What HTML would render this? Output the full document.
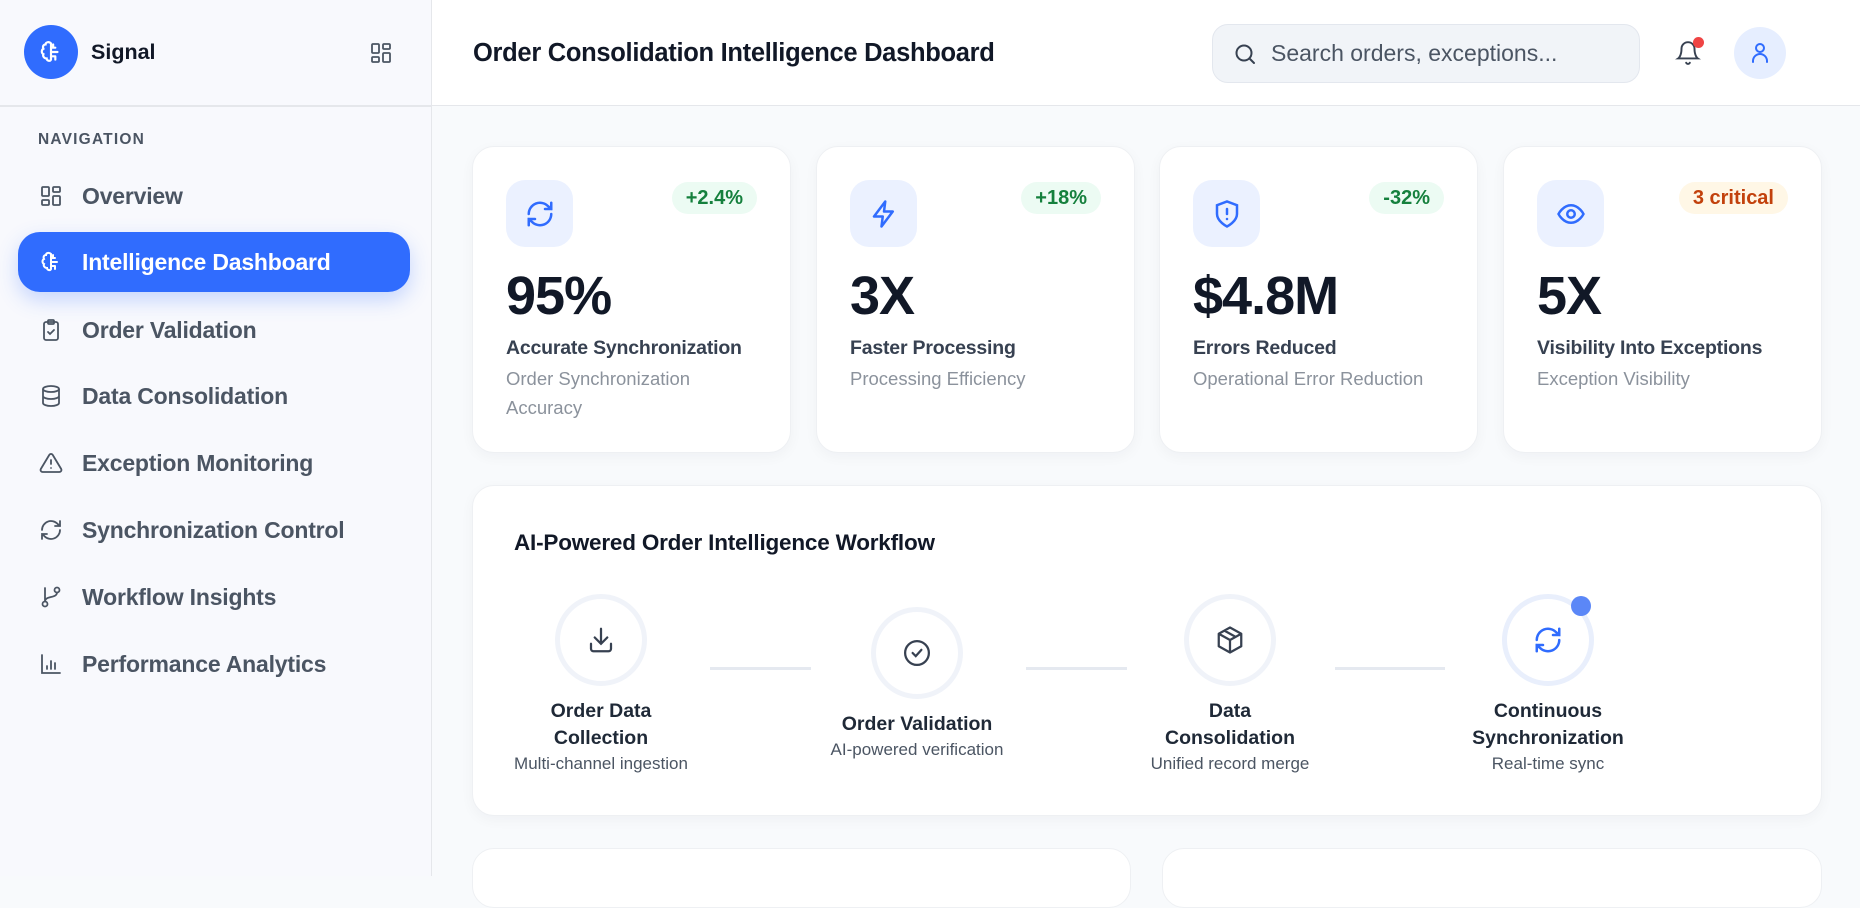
<!DOCTYPE html>
<html><head><meta charset="utf-8"><style>
*{box-sizing:border-box;margin:0;padding:0}
body{width:1860px;height:876px;overflow:hidden;background:#f8fafc;font-family:"Liberation Sans",sans-serif;position:relative;color:#111827}
.abs{position:absolute}
.side{left:0;top:0;width:432px;height:876px;background:#f8f9fd;border-right:1.5px solid #e5e7eb}
.hdr{left:432px;top:0;width:1428px;height:106px;background:#fff;border-bottom:1.5px solid #e5e7eb}
.nav{position:absolute;left:18px;width:392px;height:60px;display:flex;align-items:center;padding-left:21px;font-size:23px;font-weight:bold;color:#4b5563;letter-spacing:-0.2px}
.nav svg{width:24px;height:24px;margin-right:19px;flex:none}
.nav.act{background:#306cfe;color:#fff;border-radius:22px;box-shadow:0 8px 20px rgba(48,108,254,.25)}
.card{position:absolute;top:146px;width:319px;height:307px;background:#fff;border:1.5px solid #eef0f3;border-radius:22px;box-shadow:0 4px 14px rgba(15,23,42,.04)}
.ib{position:absolute;left:33px;top:33px;width:67px;height:67px;border-radius:19px;background:#ebf1ff;display:flex;align-items:center;justify-content:center}
.ib svg{width:30px;height:30px}
.bd{position:absolute;right:33px;top:35px;height:32px;padding:0 14px;border-radius:16px;background:#ecfbf3;color:#15803d;font-size:20px;font-weight:bold;line-height:32px}
.big{position:absolute;left:33px;top:118px;font-size:54px;font-weight:bold;color:#111827;letter-spacing:-1px}
.lb{position:absolute;left:33px;top:190px;font-size:19.5px;font-weight:bold;color:#374151;letter-spacing:-0.2px}
.sb{position:absolute;left:33px;top:218px;width:220px;font-size:18.5px;color:#8b929c;line-height:28.5px}
.step{position:absolute;width:260px;text-align:center}
.circ{width:92px;height:92px;border-radius:50%;border:5px solid #f0f3f9;margin:0 auto;display:flex;align-items:center;justify-content:center;background:#fff}
.circ svg{width:30px;height:30px}
.st{font-size:19.5px;font-weight:bold;color:#1f2937;line-height:27px;margin-top:12px}
.ss{font-size:17px;color:#4b5563;margin-top:2px}
.con{position:absolute;top:667px;height:3px;background:#e5e9f0}
</style></head><body>
<div class="abs side">
 <div class="abs" style="left:24px;top:25px;width:54px;height:54px;border-radius:50%;background:#306cfe;display:flex;align-items:center;justify-content:center">
  <svg viewBox="0 0 24 24" width="26" height="26" fill="none" stroke="#fff" stroke-width="2" stroke-linecap="round"><path d="M12 4c-2-2-5-1-5 1-2 0-3 2-2 4-2 1-2 4 0 5-1 2 1 4 3 4 0 2 3 3 4 1V4zM12 8h4M14 5v3M12 12h6M12 16h4M16 16v3"/></svg>
 </div>
 <div class="abs" style="left:91px;top:40px;font-size:21.5px;font-weight:bold;color:#111827">Signal</div>
 <svg class="abs" style="left:369px;top:41px" width="24" height="24" viewBox="0 0 24 24" fill="none" stroke="#4b5563" stroke-width="1.8"><rect x="3" y="3" width="7" height="9" rx="1"/><rect x="14" y="3" width="7" height="5" rx="1"/><rect x="14" y="12" width="7" height="9" rx="1"/><rect x="3" y="16" width="7" height="5" rx="1"/></svg>
 <div class="abs" style="left:0;top:105px;width:432px;height:1.5px;background:#e5e7eb"></div>
 <div class="abs" style="left:38px;top:131px;font-size:15.5px;font-weight:bold;color:#4b5563;letter-spacing:1.2px">NAVIGATION</div>
 <div class="nav" style="top:166px"><svg viewBox="0 0 24 24" fill="none" stroke="#4b5563" stroke-width="1.8"><rect x="3" y="3" width="7" height="9" rx="1"/><rect x="14" y="3" width="7" height="5" rx="1"/><rect x="14" y="12" width="7" height="9" rx="1"/><rect x="3" y="16" width="7" height="5" rx="1"/></svg>Overview</div>
 <div class="nav act" style="top:232px"><svg viewBox="0 0 24 24" fill="none" stroke="#fff" stroke-width="2" stroke-linecap="round"><path d="M12 4c-2-2-5-1-5 1-2 0-3 2-2 4-2 1-2 4 0 5-1 2 1 4 3 4 0 2 3 3 4 1V4zM12 8h4M14 5v3M12 12h6M12 16h4M16 16v3"/></svg>Intelligence Dashboard</div>
 <div class="nav" style="top:300px"><svg viewBox="0 0 24 24" fill="none" stroke="#4b5563" stroke-width="1.8" stroke-linecap="round"><rect x="5" y="4" width="14" height="18" rx="2"/><rect x="9" y="2" width="6" height="4" rx="1"/><path d="M9 14l2 2 4-4"/></svg>Order Validation</div>
 <div class="nav" style="top:366px"><svg viewBox="0 0 24 24" fill="none" stroke="#4b5563" stroke-width="1.8"><ellipse cx="12" cy="5" rx="8" ry="3"/><path d="M4 5v14c0 1.7 3.6 3 8 3s8-1.3 8-3V5M4 12c0 1.7 3.6 3 8 3s8-1.3 8-3"/></svg>Data Consolidation</div>
 <div class="nav" style="top:433px"><svg viewBox="0 0 24 24" fill="none" stroke="#4b5563" stroke-width="1.8" stroke-linecap="round"><path d="M10.3 3.9L1.8 18a2 2 0 001.7 3h17a2 2 0 001.7-3L13.7 3.9a2 2 0 00-3.4 0zM12 9v4M12 17h.01"/></svg>Exception Monitoring</div>
 <div class="nav" style="top:500px"><svg viewBox="0 0 24 24" fill="none" stroke="#4b5563" stroke-width="1.8" stroke-linecap="round"><path d="M3 12a9 9 0 0115.5-6.2L21 8M21 3v5h-5M21 12a9 9 0 01-15.5 6.2L3 16M3 21v-5h5"/></svg>Synchronization Control</div>
 <div class="nav" style="top:567px"><svg viewBox="0 0 24 24" fill="none" stroke="#4b5563" stroke-width="1.8" stroke-linecap="round"><circle cx="6" cy="19" r="2.5"/><circle cx="18" cy="5" r="2.5"/><path d="M6 3v13.5M18 7.5c0 6-12 3-12 9"/></svg>Workflow Insights</div>
 <div class="nav" style="top:634px"><svg viewBox="0 0 24 24" fill="none" stroke="#4b5563" stroke-width="1.8" stroke-linecap="round"><path d="M3 3v18h18M8 17v-3M12 17V9M16 17v-6"/></svg>Performance Analytics</div>
</div>
<div class="abs hdr">
 <div class="abs" style="left:41px;top:39px;font-size:25.5px;font-weight:bold;color:#111827;letter-spacing:-0.3px">Order Consolidation Intelligence Dashboard</div>
 <div class="abs" style="left:780px;top:24px;width:428px;height:59px;border-radius:16px;background:#f1f4f8;border:1.5px solid #e3e7ee">
  <svg class="abs" style="left:20px;top:17px" width="24" height="24" viewBox="0 0 24 24" fill="none" stroke="#374151" stroke-width="2" stroke-linecap="round"><circle cx="11" cy="11" r="7.5"/><path d="M16.5 16.5L21 21"/></svg>
  <div class="abs" style="left:58px;top:15px;font-size:23px;color:#4b5563">Search orders, exceptions...</div>
 </div>
 <svg class="abs" style="left:1243px;top:40px" width="26" height="26" viewBox="0 0 24 24" fill="none" stroke="#374151" stroke-width="1.8" stroke-linecap="round"><path d="M6 8a6 6 0 0112 0c0 7 3 9 3 9H3s3-2 3-9M10.3 21a1.9 1.9 0 003.4 0"/></svg>
 <div class="abs" style="left:1261px;top:37px;width:11px;height:11px;border-radius:50%;background:#ef4444"></div>
 <div class="abs" style="left:1302px;top:27px;width:52px;height:52px;border-radius:50%;background:#e6eeff;display:flex;align-items:center;justify-content:center">
  <svg width="24" height="24" viewBox="0 0 24 24" fill="none" stroke="#306cfe" stroke-width="2" stroke-linecap="round"><circle cx="12" cy="7" r="4"/><path d="M5 21v-1a7 7 0 0114 0v1"/></svg>
 </div>
</div>

<div class="card" style="left:472px"><div class="ib"><svg viewBox="0 0 24 24" fill="none" stroke="#306cfe" stroke-width="2" stroke-linecap="round"><path d="M3 12a9 9 0 0115.5-6.2L21 8M21 3v5h-5M21 12a9 9 0 01-15.5 6.2L3 16M3 21v-5h5"/></svg></div><div class="bd">+2.4%</div><div class="big">95%</div><div class="lb">Accurate Synchronization</div><div class="sb">Order Synchronization Accuracy</div></div>
<div class="card" style="left:816px"><div class="ib"><svg viewBox="0 0 24 24" fill="none" stroke="#306cfe" stroke-width="2" stroke-linejoin="round"><path d="M13 2L4 14h7l-1 8 9-12h-7l1-8z"/></svg></div><div class="bd">+18%</div><div class="big">3X</div><div class="lb">Faster Processing</div><div class="sb">Processing Efficiency</div></div>
<div class="card" style="left:1159px"><div class="ib"><svg viewBox="0 0 24 24" fill="none" stroke="#306cfe" stroke-width="2" stroke-linecap="round"><path d="M12 22s8-4 8-10V5l-8-3-8 3v7c0 6 8 10 8 10zM12 8v4M12 16h.01"/></svg></div><div class="bd">-32%</div><div class="big">$4.8M</div><div class="lb">Errors Reduced</div><div class="sb" style="width:260px">Operational Error Reduction</div></div>
<div class="card" style="left:1503px"><div class="ib"><svg viewBox="0 0 24 24" fill="none" stroke="#306cfe" stroke-width="2"><path d="M2 12s3.5-7 10-7 10 7 10 7-3.5 7-10 7S2 12 2 12z"/><circle cx="12" cy="12" r="3"/></svg></div><div class="bd" style="background:#fff7e6;color:#c2410c">3 critical</div><div class="big">5X</div><div class="lb">Visibility Into Exceptions</div><div class="sb">Exception Visibility</div></div>

<div class="abs" style="left:472px;top:485px;width:1350px;height:331px;background:#fff;border:1.5px solid #eef0f3;border-radius:22px;box-shadow:0 4px 14px rgba(15,23,42,.04)"></div>
<div class="abs" style="left:514px;top:530px;font-size:22.5px;font-weight:bold;color:#111827;letter-spacing:-0.2px">AI-Powered Order Intelligence Workflow</div>

<div class="con" style="left:710px;width:101px"></div>
<div class="con" style="left:1026px;width:101px"></div>
<div class="con" style="left:1335px;width:110px"></div>

<div class="step" style="left:471px;top:594px"><div class="circ"><svg viewBox="0 0 24 24" fill="none" stroke="#374151" stroke-width="1.8" stroke-linecap="round"><path d="M12 3v12M7 10l5 5 5-5M4 15v4a2 2 0 002 2h12a2 2 0 002-2v-4"/></svg></div><div class="st">Order Data<br>Collection</div><div class="ss">Multi-channel ingestion</div></div>
<div class="step" style="left:787px;top:607px"><div class="circ"><svg viewBox="0 0 24 24" fill="none" stroke="#374151" stroke-width="1.8" stroke-linecap="round"><circle cx="12" cy="12" r="9.5"/><path d="M8.5 12l2.5 2.5 4.5-5"/></svg></div><div class="st">Order Validation</div><div class="ss">AI-powered verification</div></div>
<div class="step" style="left:1100px;top:594px"><div class="circ"><svg viewBox="0 0 24 24" fill="none" stroke="#374151" stroke-width="1.8" stroke-linejoin="round"><path d="M12 2l9 5v10l-9 5-9-5V7l9-5zM3 7l9 5 9-5M12 12v10M7.5 4.5l9 5"/></svg></div><div class="st">Data<br>Consolidation</div><div class="ss">Unified record merge</div></div>
<div class="step" style="left:1418px;top:594px"><div class="circ" style="border-color:#e9effc"><svg viewBox="0 0 24 24" fill="none" stroke="#306cfe" stroke-width="2" stroke-linecap="round"><path d="M3 12a9 9 0 0115.5-6.2L21 8M21 3v5h-5M21 12a9 9 0 01-15.5 6.2L3 16M3 21v-5h5"/></svg></div><div class="st">Continuous<br>Synchronization</div><div class="ss">Real-time sync</div></div>
<div class="abs" style="left:1571px;top:596px;width:20px;height:20px;border-radius:50%;background:#5b87f7"></div>

<div class="abs" style="left:472px;top:848px;width:659px;height:60px;background:#fff;border:1.5px solid #eef0f3;border-radius:22px"></div>
<div class="abs" style="left:1162px;top:848px;width:660px;height:60px;background:#fff;border:1.5px solid #eef0f3;border-radius:22px"></div>
</body></html>
